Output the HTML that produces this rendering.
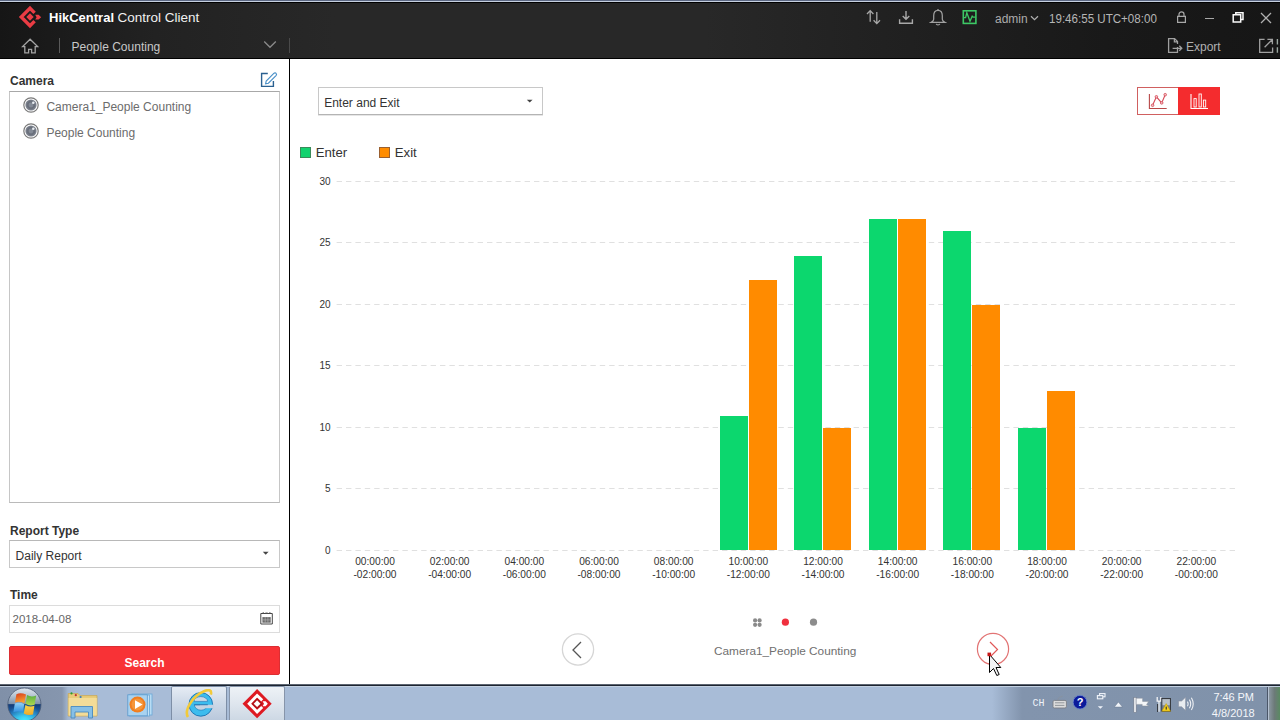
<!DOCTYPE html>
<html><head><meta charset="utf-8">
<style>
*{margin:0;padding:0;box-sizing:border-box}
html,body{width:1280px;height:720px;overflow:hidden;background:#fff;font-family:"Liberation Sans",sans-serif}
.a{position:absolute}
.t{position:absolute;white-space:nowrap;line-height:1}
#hdr{left:0;top:0;width:1280px;height:59px;background:linear-gradient(90deg,#161616 0px,#1d1d1d 85px,#222 155px,#252525 245px,#282828 335px,#282828 705px,#222 855px,#191919 1105px,#161616 1280px)}
#tb{left:0;top:684px;width:1280px;height:36px;background:linear-gradient(90deg,#8090a8 0px,#8696ae 62px,#a2b6d0 68px,#a8bcd7 80px,#a8bcd7 992px,#8294ad 1022px,#8092aa 1267px)}
</style></head><body>
<!-- header -->
<div id="hdr" class="a">
  <div class="a" style="left:0;top:0;width:1280px;height:1px;background:#5d6984"></div>
  <div class="a" style="left:0;top:1px;width:1280px;height:1px;background:#c6d0e0"></div>
  <div class="a" style="left:0;top:2px;width:1280px;height:1px;background:#000"></div>
  <div class="a" style="left:0;top:58px;width:1280px;height:1px;background:#000"></div>

  <svg class="a" style="left:18px;top:5px" width="24" height="24" viewBox="0 0 24 24">
    <polyline points="16.6,7.85 12,3.25 3.25,12 12,20.75 16.6,16.15" fill="none" stroke="#ea3c44" stroke-width="3.4" stroke-linejoin="miter"/>
    <polygon points="12,8.3 15.7,12 12,15.7 8.3,12" fill="#ea3c44"/>
    <polygon points="17.2,9.8 20.6,9.8 23.2,12.2 20.6,14.6 17.2,14.6 18.6,12.2" fill="#ea3c44"/>
  </svg>
  <div class="t" style="left:49px;top:11px;font-size:13px;font-weight:bold;color:#fff">HikCentral</div>
  <div class="t" style="left:117.5px;top:10.6px;font-size:13.5px;color:#f0f0f0">Control Client</div>
  <svg class="a" style="left:21px;top:38px" width="18" height="17" viewBox="0 0 18 17">
    <path d="M3.8,8.6 H1.6 L9.1,1.2 L16.6,8.6 H14.2 V14.8 H10.6 V11.4 H7.6 V14.8 H3.8 Z" fill="none" stroke="#a4a4a4" stroke-width="1.3" stroke-linejoin="miter"/>
  </svg>
  <div class="a" style="left:59px;top:38px;width:1px;height:15px;background:#5a5a5a"></div>
  <div class="t" style="left:71.5px;top:41px;font-size:12px;color:#c8c8c8">People Counting</div>
  <svg class="a" style="left:263px;top:40px" width="14" height="9" viewBox="0 0 14 9">
    <polyline points="1.2,1.5 7,7.3 12.8,1.5" fill="none" stroke="#8a8a8a" stroke-width="1.3"/>
  </svg>
  <div class="a" style="left:289px;top:38px;width:1px;height:15px;background:#4a4a4a"></div>

  <svg class="a" style="left:865px;top:9px" width="18" height="17" viewBox="0 0 18 17">
    <path d="M5.2,1.6 V12.8 M2,5 L5.2,1.6 L8.4,5 M11.8,3.1 V14.8 M8.6,11.2 L11.8,14.6 L15,11.2" fill="none" stroke="#a8a8a8" stroke-width="1.3"/>
  </svg>
  <svg class="a" style="left:897px;top:9px" width="18" height="17" viewBox="0 0 18 17">
    <path d="M9,2 V10.5 M5.7,7 L9,10.3 L12.3,7 M2.6,10.2 V14.3 H15.4 V10.2" fill="none" stroke="#a8a8a8" stroke-width="1.4"/>
  </svg>
  <svg class="a" style="left:929px;top:8px" width="18" height="19" viewBox="0 0 18 19">
    <path d="M9,2.4 C6.3,2.4 4.7,4.8 4.7,7.8 V11.2 C4.7,12.6 3.4,13.6 2.2,14.3 H15.8 C14.6,13.6 13.3,12.6 13.3,11.2 V7.8 C13.3,4.8 11.7,2.4 9,2.4 Z" fill="none" stroke="#a0a0a0" stroke-width="1.25"/>
    <path d="M7.2,15.8 C7.6,17.2 10.4,17.2 10.8,15.8" fill="none" stroke="#a0a0a0" stroke-width="1.2"/>
    <path d="M9,1 V2.4" stroke="#a0a0a0" stroke-width="1.2"/>
  </svg>
  <svg class="a" style="left:961px;top:9px" width="17" height="16" viewBox="0 0 17 16">
    <rect x="2.3" y="1.8" width="12.6" height="12.6" fill="none" stroke="#3dc865" stroke-width="1.6"/>
    <polyline points="2.8,8.7 4.6,8.7 5.8,3.8 9,12.2 11.2,7.2 12.2,8.2 14.4,8.2" fill="none" stroke="#3dc865" stroke-width="1.3"/>
  </svg>
  <div class="t" style="left:995px;top:13px;font-size:12px;color:#acacac">admin</div>
  <svg class="a" style="left:1029px;top:15px" width="10" height="7" viewBox="0 0 10 7">
    <polyline points="2,1.2 5.5,4.6 9,1.2" fill="none" stroke="#b0b0b0" stroke-width="1.2"/>
  </svg>
  <div class="t" style="left:1049px;top:13.1px;font-size:12px;color:#b6b6b6;transform:scaleX(0.965);transform-origin:0 0">19:46:55 UTC+08:00</div>
  <svg class="a" style="left:1175px;top:10px" width="13" height="14" viewBox="0 0 13 14">
    <path d="M4,6 V4.2 C4,1.2 9,1.2 9,4.2 V6 M2.6,6.3 H10.4 V12.3 H2.6 Z" fill="none" stroke="#a8a8a8" stroke-width="1.2"/>
  </svg>
  <div class="a" style="left:1205px;top:18px;width:9px;height:1.3px;background:#a8a8a8"></div>
  <svg class="a" style="left:1231px;top:11px" width="14" height="13" viewBox="0 0 14 13">
    <path d="M4.8,3.7 V1.7 H12 V8.6 H10 M2.2,3.8 H9.7 V11 H2.2 Z" fill="none" stroke="#fafafa" stroke-width="1.5"/>
  </svg>
  <svg class="a" style="left:1259px;top:11px" width="14" height="14" viewBox="0 0 14 14">
    <path d="M2,2 L12,12 M12,2 L2,12" fill="none" stroke="#b0b0b0" stroke-width="1.3"/>
  </svg>
  <svg class="a" style="left:1166px;top:37px" width="18" height="17" viewBox="0 0 18 17">
    <path d="M11.5,10 V15.3 H2.6 V1.6 H8.6 L11.5,4.5 V7 M8.4,1.8 V4.8 H11.3 M6.6,11.3 H15.8 M13.3,8.8 L15.8,11.3 L13.3,13.8" fill="none" stroke="#a0a0a0" stroke-width="1.3"/>
  </svg>
  <div class="t" style="left:1186px;top:40.8px;font-size:12px;color:#b0b0b0">Export</div>
  <svg class="a" style="left:1258px;top:37px" width="22" height="17" viewBox="0 0 22 17">
    <path d="M6.6,2.3 H1.7 V15.3 H14.6 V10.6 M6.6,10.2 L13.6,3.2 M9.4,2.3 H14.4 V7.2" fill="none" stroke="#a0a0a0" stroke-width="1.3"/>
    <path d="M19.4,2 V7.4 M19.4,10.2 V15.8" stroke="#9aa6a0" stroke-width="1.4"/>
  </svg>
</div>

<!-- left panel -->
<div class="t" style="left:10px;top:75.1px;font-size:12px;font-weight:bold;color:#333">Camera</div>
<svg class="a" style="left:259px;top:71px" width="19" height="18" viewBox="0 0 19 18">
  <path d="M8.8,2.5 H2.6 V15.4 H14.4 V10" fill="none" stroke="#2a6090" stroke-width="1.4"/>
  <path d="M6.6,12.8 L7.2,10 L14.8,2.4 C15.5,1.7 16.6,1.7 17.1,2.3 C17.7,2.9 17.6,3.9 17,4.6 L9.4,12.2 Z" fill="none" stroke="#4a90c8" stroke-width="1.15"/>
</svg>
<div class="a" style="left:9px;top:91px;width:271px;height:412px;border:1px solid #c6c6c6;border-top-color:#a8a8a8;border-bottom-color:#bababa"></div>
<svg class="a" style="left:23px;top:97px" width="16" height="16" viewBox="0 0 16 16">
    <circle cx="8" cy="8" r="7.2" fill="#fff" stroke="#7a7a7a" stroke-width="1.2"/>
    <circle cx="8" cy="8" r="5.6" fill="#7c828e"/>
    <circle cx="8" cy="8" r="4.4" fill="#6a707c"/>
    <circle cx="8" cy="8" r="2.4" fill="#838a96"/>
    <circle cx="10.3" cy="5.7" r="1.3" fill="#e8ecf2"/>
  </svg>
<div class="t" style="left:46.4px;top:101px;font-size:12px;color:#6c6c6c">Camera1_People Counting</div>
<svg class="a" style="left:23px;top:123px" width="16" height="16" viewBox="0 0 16 16">
    <circle cx="8" cy="8" r="7.2" fill="#fff" stroke="#7a7a7a" stroke-width="1.2"/>
    <circle cx="8" cy="8" r="5.6" fill="#7c828e"/>
    <circle cx="8" cy="8" r="4.4" fill="#6a707c"/>
    <circle cx="8" cy="8" r="2.4" fill="#838a96"/>
    <circle cx="10.3" cy="5.7" r="1.3" fill="#e8ecf2"/>
  </svg>
<div class="t" style="left:46.4px;top:127.1px;font-size:12px;color:#6c6c6c">People Counting</div>

<div class="t" style="left:10px;top:524.6px;font-size:12px;font-weight:bold;color:#333">Report Type</div>
<div class="a" style="left:9px;top:540px;width:271px;height:28px;border:1px solid #c8c8c8;border-top-color:#b8b8b8"></div>
<div class="t" style="left:15.6px;top:549.6px;font-size:12px;color:#333">Daily Report</div>
<svg class="a" style="left:262px;top:551px" width="8" height="5" viewBox="0 0 8 5"><polygon points="0.8,0.8 6.6,0.8 3.7,3.8" fill="#444"/></svg>

<div class="t" style="left:10px;top:588.8px;font-size:12px;font-weight:bold;color:#333">Time</div>
<div class="a" style="left:9px;top:605px;width:271px;height:28px;border:1px solid #dcdcdc"></div>
<div class="t" style="left:12.5px;top:613.6px;font-size:11.5px;color:#666">2018-04-08</div>
<svg class="a" style="left:259px;top:611px" width="15" height="15" viewBox="0 0 15 15">
  <path d="M1.8,2.5 H13.3 V13 H1.8 Z" fill="none" stroke="#454545" stroke-width="1"/>
  <path d="M4.2,1 V2.6 M10.9,1 V2.6 M6.4,2 H8.7" stroke="#555" stroke-width="0.9"/>
  <rect x="3.4" y="6.1" width="8.3" height="5.6" fill="#6a6a6a"/>
  <path d="M6.2,6.1 V11.7 M8.9,6.1 V11.7 M3.4,8.9 H11.7" stroke="#b8b8b8" stroke-width="0.6"/>
</svg>
<div class="a" style="left:9px;top:646px;width:271px;height:29px;background:#f83236;border:1px solid #dc2e33;border-radius:2px"></div>
<div class="t" style="left:9px;top:657.1px;width:271px;text-align:center;font-size:12px;font-weight:bold;color:#fff">Search</div>

<!-- chart -->
<div class="a" style="left:318px;top:87px;width:225px;height:28px;border:1px solid #c8c8c8;border-bottom-color:#b4b4b4;box-shadow:0 1px 0 #e6e6e6"></div>
<div class="t" style="left:324.2px;top:96.8px;font-size:12px;color:#333">Enter and Exit</div>
<svg class="a" style="left:526px;top:99px" width="8" height="5" viewBox="0 0 8 5"><polygon points="0.8,0.8 6.6,0.8 3.7,3.6" fill="#444"/></svg>

<div class="a" style="left:1137px;top:87px;width:83px;height:28px;border:1px solid #d06060;background:#fff"></div>
<div class="a" style="left:1178px;top:87px;width:42px;height:28px;background:#f42c2e"></div>
<svg class="a" style="left:1146px;top:92px" width="24" height="18" viewBox="0 0 24 18">
  <path d="M3.4,1.9 V16.5 H20.7" fill="none" stroke="#b84848" stroke-width="1.1"/>
  <path d="M6.6,13.3 L10.4,4.8 L15.7,10.9 L19.2,2.7" fill="none" stroke="#d44a58" stroke-width="1.1"/>
  <circle cx="6.6" cy="13.3" r="1.3" fill="#f4c0c4" stroke="#d44a58" stroke-width="0.8"/><circle cx="10.4" cy="4.8" r="1.3" fill="#f4c0c4" stroke="#d44a58" stroke-width="0.8"/><circle cx="15.7" cy="10.9" r="1.3" fill="#f4c0c4" stroke="#d44a58" stroke-width="0.8"/><circle cx="19.2" cy="2.7" r="1.3" fill="#f4c0c4" stroke="#d44a58" stroke-width="0.8"/>
</svg>
<svg class="a" style="left:1188px;top:92px" width="24" height="18" viewBox="0 0 24 18">
  <path d="M3,1.9 V16.5 H20" fill="none" stroke="#fff" stroke-width="1.1"/>
  <rect x="6" y="6.6" width="2.2" height="8.4" fill="none" stroke="#fff" stroke-width="0.9"/>
  <rect x="11" y="2" width="2.3" height="13" fill="none" stroke="#fff" stroke-width="0.9"/>
  <rect x="15.4" y="8.1" width="2.3" height="6.9" fill="none" stroke="#fff" stroke-width="0.9"/>
</svg>

<div class="a" style="left:300px;top:147px;width:11px;height:11px;background:#12d26e;border:1px solid #3a8a5a"></div>
<div class="t" style="left:315.7px;top:146.4px;font-size:13.2px;color:#333">Enter</div>
<div class="a" style="left:379px;top:147px;width:11px;height:11px;background:#ff8c00;border:1px solid #9a6030"></div>
<div class="t" style="left:394.8px;top:146.4px;font-size:13.2px;color:#333">Exit</div>

<svg class="a" style="left:0;top:0" width="1280" height="720">
<line x1="336.6" y1="550.5" x2="1238" y2="550.5" stroke="#e0e0e0" stroke-width="1" stroke-dasharray="5.4 4"/>
<line x1="336.6" y1="488.5" x2="1238" y2="488.5" stroke="#e0e0e0" stroke-width="1" stroke-dasharray="5.4 4"/>
<line x1="336.6" y1="427.5" x2="1238" y2="427.5" stroke="#e0e0e0" stroke-width="1" stroke-dasharray="5.4 4"/>
<line x1="336.6" y1="365.5" x2="1238" y2="365.5" stroke="#e0e0e0" stroke-width="1" stroke-dasharray="5.4 4"/>
<line x1="336.6" y1="304.5" x2="1238" y2="304.5" stroke="#e0e0e0" stroke-width="1" stroke-dasharray="5.4 4"/>
<line x1="336.6" y1="242.5" x2="1238" y2="242.5" stroke="#e0e0e0" stroke-width="1" stroke-dasharray="5.4 4"/>
<line x1="336.6" y1="181.5" x2="1238" y2="181.5" stroke="#e0e0e0" stroke-width="1" stroke-dasharray="5.4 4"/>
</svg>
<div class="t" style="left:290px;width:40.5px;text-align:right;top:545.6px;font-size:10px;color:#333">0</div>
<div class="t" style="left:290px;width:40.5px;text-align:right;top:483.6px;font-size:10px;color:#333">5</div>
<div class="t" style="left:290px;width:40.5px;text-align:right;top:422.6px;font-size:10px;color:#333">10</div>
<div class="t" style="left:290px;width:40.5px;text-align:right;top:360.6px;font-size:10px;color:#333">15</div>
<div class="t" style="left:290px;width:40.5px;text-align:right;top:299.6px;font-size:10px;color:#333">20</div>
<div class="t" style="left:290px;width:40.5px;text-align:right;top:237.6px;font-size:10px;color:#333">25</div>
<div class="t" style="left:290px;width:40.5px;text-align:right;top:176.6px;font-size:10px;color:#333">30</div>
<div class="a" style="left:720px;top:416px;width:28px;height:134px;background:#0cd76e"></div>
<div class="a" style="left:749px;top:280px;width:28px;height:270px;background:#ff8b00"></div>
<div class="a" style="left:794px;top:256px;width:28px;height:294px;background:#0cd76e"></div>
<div class="a" style="left:823px;top:428px;width:28px;height:122px;background:#ff8b00"></div>
<div class="a" style="left:869px;top:219px;width:28px;height:331px;background:#0cd76e"></div>
<div class="a" style="left:898px;top:219px;width:28px;height:331px;background:#ff8b00"></div>
<div class="a" style="left:943px;top:231px;width:28px;height:319px;background:#0cd76e"></div>
<div class="a" style="left:972px;top:305px;width:28px;height:245px;background:#ff8b00"></div>
<div class="a" style="left:1018px;top:428px;width:28px;height:122px;background:#0cd76e"></div>
<div class="a" style="left:1047px;top:391px;width:28px;height:159px;background:#ff8b00"></div>
<div class="t" style="left:335.00px;width:80px;text-align:center;top:557.1px;font-size:10.2px;color:#333">00:00:00</div>
<div class="t" style="left:335.00px;width:80px;text-align:center;top:569.5px;font-size:10.2px;color:#333">-02:00:00</div>
<div class="t" style="left:409.67px;width:80px;text-align:center;top:557.1px;font-size:10.2px;color:#333">02:00:00</div>
<div class="t" style="left:409.67px;width:80px;text-align:center;top:569.5px;font-size:10.2px;color:#333">-04:00:00</div>
<div class="t" style="left:484.34px;width:80px;text-align:center;top:557.1px;font-size:10.2px;color:#333">04:00:00</div>
<div class="t" style="left:484.34px;width:80px;text-align:center;top:569.5px;font-size:10.2px;color:#333">-06:00:00</div>
<div class="t" style="left:559.01px;width:80px;text-align:center;top:557.1px;font-size:10.2px;color:#333">06:00:00</div>
<div class="t" style="left:559.01px;width:80px;text-align:center;top:569.5px;font-size:10.2px;color:#333">-08:00:00</div>
<div class="t" style="left:633.68px;width:80px;text-align:center;top:557.1px;font-size:10.2px;color:#333">08:00:00</div>
<div class="t" style="left:633.68px;width:80px;text-align:center;top:569.5px;font-size:10.2px;color:#333">-10:00:00</div>
<div class="t" style="left:708.35px;width:80px;text-align:center;top:557.1px;font-size:10.2px;color:#333">10:00:00</div>
<div class="t" style="left:708.35px;width:80px;text-align:center;top:569.5px;font-size:10.2px;color:#333">-12:00:00</div>
<div class="t" style="left:783.02px;width:80px;text-align:center;top:557.1px;font-size:10.2px;color:#333">12:00:00</div>
<div class="t" style="left:783.02px;width:80px;text-align:center;top:569.5px;font-size:10.2px;color:#333">-14:00:00</div>
<div class="t" style="left:857.69px;width:80px;text-align:center;top:557.1px;font-size:10.2px;color:#333">14:00:00</div>
<div class="t" style="left:857.69px;width:80px;text-align:center;top:569.5px;font-size:10.2px;color:#333">-16:00:00</div>
<div class="t" style="left:932.36px;width:80px;text-align:center;top:557.1px;font-size:10.2px;color:#333">16:00:00</div>
<div class="t" style="left:932.36px;width:80px;text-align:center;top:569.5px;font-size:10.2px;color:#333">-18:00:00</div>
<div class="t" style="left:1007.03px;width:80px;text-align:center;top:557.1px;font-size:10.2px;color:#333">18:00:00</div>
<div class="t" style="left:1007.03px;width:80px;text-align:center;top:569.5px;font-size:10.2px;color:#333">-20:00:00</div>
<div class="t" style="left:1081.70px;width:80px;text-align:center;top:557.1px;font-size:10.2px;color:#333">20:00:00</div>
<div class="t" style="left:1081.70px;width:80px;text-align:center;top:569.5px;font-size:10.2px;color:#333">-22:00:00</div>
<div class="t" style="left:1156.37px;width:80px;text-align:center;top:557.1px;font-size:10.2px;color:#333">22:00:00</div>
<div class="t" style="left:1156.37px;width:80px;text-align:center;top:569.5px;font-size:10.2px;color:#333">-00:00:00</div>
<svg class="a" style="left:0;top:0" width="1280" height="720">
  <circle cx="578" cy="649.5" r="15.6" fill="none" stroke="#d6d6d6" stroke-width="1.3"/>
  <polyline points="581,642 573,650 581,658" fill="none" stroke="#555" stroke-width="1.3"/>
  <circle cx="755.1" cy="620.4" r="2.1" fill="#8a8a8a"/><circle cx="759.6" cy="620.4" r="2.1" fill="#8a8a8a"/>
  <circle cx="755.1" cy="624.8" r="2.1" fill="#8a8a8a"/><circle cx="759.6" cy="624.8" r="2.1" fill="#8a8a8a"/>
  <circle cx="785.4" cy="622.2" r="3.6" fill="#f0303e"/>
  <circle cx="813.5" cy="622.2" r="3.6" fill="#8c8c8c"/>
  <circle cx="993" cy="649" r="15.6" fill="none" stroke="#e27474" stroke-width="1.2"/>
  <polyline points="990,642 997.5,649.5 990,657" fill="none" stroke="#e05858" stroke-width="1.2"/>
  <path d="M989.5,654.5 V672.5 L993.5,668.5 L996.8,675.5 L999.2,674.5 L996,667.5 L1000.8,667.5 Z" fill="#f4f4f6" stroke="#000" stroke-width="1"/>
  <rect x="987.5" y="652.6" width="3.6" height="3.6" fill="#c81818"/>
</svg>
<div class="t" style="left:714px;top:646.1px;font-size:11.8px;color:#707070">Camera1_People Counting</div>

<!-- left panel separator -->
<div class="a" style="left:289px;top:59px;width:1px;height:625px;background:#000"></div>

<!-- taskbar -->
<div id="tb" class="a">
  <div class="a" style="left:0;top:0;width:1280px;height:1px;background:#5c6470"></div>
  <div class="a" style="left:0;top:1px;width:1280px;height:1px;background:#1c2430"></div>
  <div class="a" style="left:0;top:2px;width:1280px;height:1px;background:#c3d1e2"></div>

  <!-- start orb -->
  <svg class="a" style="left:0;top:0" width="60" height="36" viewBox="0 0 60 36">
    <defs>
      <linearGradient id="orbTop" x1="0" y1="0" x2="0" y2="1">
        <stop offset="0" stop-color="#dfe6ee"/><stop offset="0.22" stop-color="#b8c6d4"/><stop offset="0.48" stop-color="#7e90a8"/><stop offset="0.5" stop-color="#143c78"/><stop offset="0.8" stop-color="#1e6cb8"/><stop offset="1" stop-color="#30c8f4"/>
      </linearGradient>
      <radialGradient id="orbGlow" cx="0.5" cy="1" r="0.55">
        <stop offset="0" stop-color="#48e8ff" stop-opacity="0.95"/><stop offset="1" stop-color="#48e8ff" stop-opacity="0"/>
      </radialGradient>
      <linearGradient id="fR" x1="0" y1="0" x2="0.3" y2="1"><stop offset="0" stop-color="#d83c1c"/><stop offset="1" stop-color="#f8a030"/></linearGradient>
      <linearGradient id="fG" x1="0" y1="0" x2="0" y2="1"><stop offset="0" stop-color="#58b040"/><stop offset="1" stop-color="#b0d850"/></linearGradient>
      <linearGradient id="fB" x1="0" y1="0" x2="0" y2="1"><stop offset="0" stop-color="#90d0f4"/><stop offset="1" stop-color="#2a8ce0"/></linearGradient>
      <linearGradient id="fY" x1="0" y1="0" x2="0" y2="1"><stop offset="0" stop-color="#f8d44a"/><stop offset="1" stop-color="#f0a828"/></linearGradient>
    </defs>
    <circle cx="24.4" cy="20.6" r="16.6" fill="url(#orbTop)" stroke="#4a5a74" stroke-width="0.8"/>
    <circle cx="24.4" cy="20.6" r="16" fill="url(#orbGlow)"/>
    <path d="M16.4,10.2 Q20.6,8.2 26,10.6 L24.4,19.2 Q19.4,16.8 15,18.6 Z" fill="url(#fR)"/>
    <path d="M27,11 Q31.4,13.6 36.2,11.4 L34.6,20.8 Q29.6,22.6 25.6,19.8 Z" fill="url(#fG)"/>
    <path d="M14.8,19.6 Q19.4,17.8 24.2,20.2 L22.8,28.6 Q18.2,26.4 13.4,28.2 Z" fill="url(#fB)"/>
    <path d="M25.4,21 Q29.8,23.6 34.4,21.8 L33,30.6 Q28,32 23.8,29.4 Z" fill="url(#fY)"/>
  </svg>
  <!-- explorer -->
  <svg class="a" style="left:66px;top:6px" width="34" height="30" viewBox="0 0 34 30">
    <path d="M2.2,3.5 H12 L14,5.6 H31 V26 H2.2 Z" fill="#e8cc7a" stroke="#c8a858" stroke-width="0.8"/>
    <rect x="2.6" y="8" width="28.2" height="17.6" fill="#f3dc98"/>
    <circle cx="5.5" cy="3.4" r="1.1" fill="#2c9c2c"/><circle cx="9.8" cy="5.2" r="1.1" fill="#c03030"/><circle cx="14.6" cy="7" r="1.1" fill="#3a80c0"/>
    <path d="M5,16.5 H26.5 V28 H22.5 V22 H9 V28 H5 Z" fill="#86bfe6" stroke="#4a8ac0" stroke-width="0.9"/>
  </svg>
  <!-- media player -->
  <svg class="a" style="left:126px;top:8px" width="28" height="26" viewBox="0 0 28 26">
    <rect x="6" y="2" width="20" height="21" fill="#b8dcf4" stroke="#6aa8d8" stroke-width="0.8"/>
    <rect x="3.5" y="3" width="20" height="21" fill="#c4e2f6" stroke="#6aa8d8" stroke-width="0.8"/>
    <rect x="1.8" y="2.8" width="19.5" height="21" fill="#a8d2f0" stroke="#5a98cc" stroke-width="0.8"/>
    <circle cx="11.5" cy="12.6" r="8" fill="#f07e20"/>
    <circle cx="11.5" cy="12.6" r="6" fill="#f5963a"/>
    <polygon points="9,8.2 16.6,12.6 9,17" fill="#fff"/>
  </svg>
  <!-- IE button -->
  <div class="a" style="left:171px;top:2px;width:56px;height:34px;border:1px solid #7d8ea6;border-bottom:none;border-radius:2px 2px 0 0;background:linear-gradient(180deg,#e6ecf4 0%,#cfdae8 45%,#b9c8dc 100%)"></div>
  <svg class="a" style="left:185px;top:5px" width="30" height="31" viewBox="0 0 30 31">
    <circle cx="15.8" cy="15.4" r="11.8" fill="#3cbcee" stroke="#1a70b0" stroke-width="0.9"/>
    <path d="M9,12.4 A6.8,4.8 0 0 1 22.6,12.4 Z" fill="#cdd9e7" stroke="#1a70b0" stroke-width="0.6"/>
    <path d="M9.4,15.8 A6.6,5.4 0 0 0 22.6,15.8 Z" fill="#c6d4e4" stroke="#1a70b0" stroke-width="0.6"/>
    <rect x="15" y="15.8" width="14" height="3.4" fill="#c4d2e2"/>
    <rect x="9.2" y="15.4" width="13.6" height="0.8" fill="#1a70b0"/>
    <path d="M3,28 C-1,22 7,7 19,2.2 C24.6,0 27,1.4 25.8,5.6" fill="none" stroke="#f2ca3a" stroke-width="2.6"/>
  </svg>
  <!-- HikCentral button -->
  <div class="a" style="left:229px;top:2px;width:56px;height:34px;border:1px solid #8795aa;border-bottom:none;border-radius:2px 2px 0 0;background:linear-gradient(180deg,#eef2f6 0%,#dfe6ee 50%,#cdd8e4 100%)"></div>
  <svg class="a" style="left:242px;top:4px" width="30" height="31" viewBox="0 0 30 31">
    <polygon points="15.1,1.1 29.7,15.7 15.1,30.3 0.5,15.7" fill="#de1a22"/>
    <polyline points="20.2,12.4 15.1,7.5 7.2,15.7 15.1,23.9 20.2,19" fill="none" stroke="#fff" stroke-width="2.9"/>
    <polygon points="15.1,9.4 21.4,15.7 15.1,22 8.8,15.7" fill="#a81016" opacity="0"/>
    <polygon points="15.1,10.2 20.6,15.7 15.1,21.2 9.6,15.7" fill="#b01218"/>
    <polygon points="15.1,12.3 18.5,15.7 15.1,19.1 11.7,15.7" fill="#fff"/>
    <polygon points="20.6,13.2 23.6,13.2 25.8,15.7 23.6,18.2 20.6,18.2 22,15.7" fill="#fff"/>
  </svg>
  <!-- tray -->
  <div class="t" style="left:1032.6px;top:13.6px;font-family:'Liberation Mono',monospace;font-size:10px;color:#eef2f8;transform:scaleY(1.18);transform-origin:0 0">CH</div>
  <svg class="a" style="left:1050px;top:10px" width="19" height="16" viewBox="0 0 19 16">
    <path d="M8,5.6 C8,3.2 10,3.6 12.6,2" fill="none" stroke="#8a929c" stroke-width="0.8"/>
    <rect x="3" y="6.4" width="13.4" height="7.6" rx="1.4" fill="#dcdcdc" stroke="#7a7e84" stroke-width="0.9"/>
    <path d="M5,8.8 H14.4 M5,11.4 H14.4" stroke="#8a8e94" stroke-width="0.9"/>
  </svg>
  <svg class="a" style="left:1072px;top:10px" width="16" height="16" viewBox="0 0 16 16">
    <circle cx="8" cy="8.2" r="6.9" fill="#0c1a9a" stroke="#6c86c8" stroke-width="0.9"/>
    <text x="8" y="12.2" text-anchor="middle" font-family="Liberation Sans" font-weight="bold" font-size="11" fill="#fff">?</text>
  </svg>
  <svg class="a" style="left:1095px;top:8px" width="12" height="18" viewBox="0 0 12 18">
    <rect x="4.6" y="1.6" width="5.4" height="3.2" fill="none" stroke="#f0f4fa" stroke-width="1.1"/>
    <rect x="2.4" y="3.6" width="5.4" height="3.2" fill="#8a9ab0" stroke="#f0f4fa" stroke-width="1.1"/>
    <polygon points="2.8,14.2 8,14.2 5.4,16.8" fill="#f0f4fa"/>
  </svg>
  <svg class="a" style="left:1113px;top:16px" width="11" height="8" viewBox="0 0 11 8"><polygon points="1.4,7 9.4,7 5.4,2" fill="#f0f4fa" stroke="#5a6a80" stroke-width="0.4"/></svg>
  <svg class="a" style="left:1132px;top:12px" width="19" height="17" viewBox="0 0 19 17">
    <rect x="1.8" y="1.4" width="2.4" height="15" fill="#e6e8ec" stroke="#6a7080" stroke-width="0.5"/>
    <path d="M4.2,2.2 H10.6 V5.4 H16.6 L14.6,8.6 L16.6,10 H10.2 V8.4 H4.2 Z" fill="#f4f6f8" stroke="#8a909a" stroke-width="0.5"/>
  </svg>
  <svg class="a" style="left:1155px;top:12px" width="18" height="17" viewBox="0 0 18 17">
    <path d="M2.2,1 V5.2 H5.8 V1 M4,5.2 V15.8" fill="none" stroke="#f2f4f6" stroke-width="1.3"/>
    <path d="M2.6,8 V16" stroke="#1a1a1a" stroke-width="0.8"/>
    <rect x="6.8" y="2.4" width="8.8" height="12.8" fill="#7a8494" stroke="#1c1c1c" stroke-width="0.7"/>
    <rect x="7.6" y="3.2" width="7.2" height="6" fill="#b8c0c8"/>
    <polygon points="11.2,7.6 15.6,15.2 6.8,15.2" fill="#f4d020" stroke="#b89000" stroke-width="0.5"/>
    <rect x="10.7" y="10.6" width="1" height="3" fill="#222"/>
  </svg>
  <svg class="a" style="left:1177px;top:12px" width="18" height="16" viewBox="0 0 18 16">
    <polygon points="1.6,5 4.6,5 8.6,1.2 8.6,14.6 4.6,10.8 1.6,10.8" fill="#e8ecf0" stroke="#8890a0" stroke-width="0.6"/>
    <path d="M10.4,5.6 Q11.8,7.9 10.4,10.2 M12.4,3.6 Q15,7.9 12.4,12.2 M14.4,1.8 Q18,7.9 14.4,14" fill="none" stroke="#eef0f4" stroke-width="1.1"/>
  </svg>
  <div class="t" style="left:1213.5px;top:7.9px;font-size:11px;color:#f4f6fa;letter-spacing:-0.1px">7:46 PM</div>
  <div class="t" style="left:1211.8px;top:24.2px;font-size:11px;color:#f4f6fa;letter-spacing:0px">4/8/2018</div>
  <div class="a" style="left:1267px;top:3px;width:1px;height:33px;background:#4a5668"></div>
  <div class="a" style="left:1268px;top:3px;width:1px;height:33px;background:#b4c0d0"></div>
  <div class="a" style="left:1269px;top:3px;width:11px;height:33px;background:linear-gradient(90deg,#8a96a0,#6c7a78 50%,#5a8a62)"></div>
</div>
</body></html>
